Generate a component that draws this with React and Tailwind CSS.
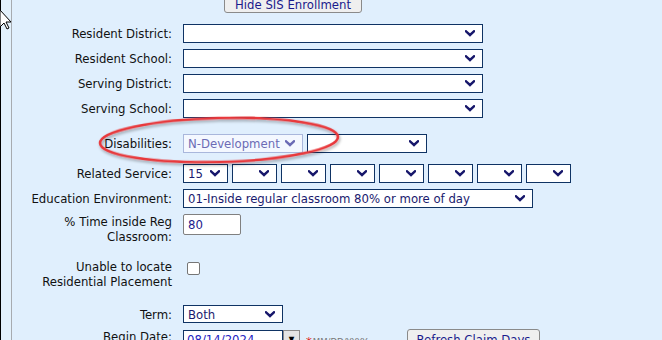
import React from 'react';

const font = "font-['DejaVu_Sans_Condensed','DejaVu_Sans',sans-serif]";

function Chevron({ color = '#17176b' }) {
  return (
    <svg width="10" height="7" viewBox="0 0 10 7" className="shrink-0">
      <polyline points="1,1.3 5,5 9,1.3" fill="none" stroke={color} strokeWidth="2.4" strokeLinecap="square" />
    </svg>
  );
}

function Select({ width, value = '', disabled = false, height = 'h-[19px]' }) {
  return (
    <div
      className={`flex ${height} items-center justify-between border pl-[4px] pr-[7px] text-[13px] leading-none ${
        disabled ? 'border-[#a9b7dc] bg-[#f4f8ff] text-[#6b6bb5]' : 'border-[#0f3364] bg-white text-[#1a1a6e]'
      }`}
      style={{ width }}
    >
      <span className="whitespace-nowrap">{value}</span>
      <Chevron color={disabled ? '#6b6bb5' : '#17176b'} />
    </div>
  );
}

function Row({ label, children, className = '', align = 'items-center' }) {
  return (
    <div className={`flex ${align} ${className}`}>
      <div className="w-[160px] shrink-0 text-right text-[13px] leading-[15px] text-[#111]">{label}</div>
      <div className="ml-[11px] flex items-center">{children}</div>
    </div>
  );
}

export default function App() {
  const services = ['15', '', '', '', '', '', '', ''];

  return (
    <div className={`relative flex h-[340px] w-[662px] overflow-hidden bg-[#e0effd] ${font}`}>
      <div className="w-px bg-black" />
      <div className="w-[10px] bg-[#e3f1fc]" />
      <div className="w-px bg-[#a7abb0]" />

      <div className="flex flex-1 flex-col">
        <div className="-mt-[8px] ml-[212px] flex h-[21px]">
          <button className="h-[21px] w-[138px] rounded-[3px] border border-[#8a8a8a] bg-[#efefef] pt-[3px] text-[13px] leading-none text-[#1a1a8c]">
            Hide SIS Enrollment
          </button>
        </div>

        <Row label="Resident District:" className="mt-[11px]"><Select width={300} /></Row>
        <Row label="Resident School:" className="mt-[6px]"><Select width={300} /></Row>
        <Row label="Serving District:" className="mt-[6px]"><Select width={300} /></Row>
        <Row label="Serving School:" className="mt-[6px]"><Select width={300} /></Row>

        <Row label="Disabilities:" className="mt-[16px]">
          <Select width={120} value="N-Development" disabled />
          <div className="ml-[4px]"><Select width={120} /></div>
        </Row>

        <Row label="Related Service:" className="mt-[11px]">
          <div className="flex gap-[4px]">
            {services.map((s, i) => (
              <Select key={i} width={45} value={s} />
            ))}
          </div>
        </Row>

        <Row label="Education Environment:" className="mt-[6px]">
          <Select width={350} value="01-Inside regular classroom 80% or more of day" />
        </Row>

        <Row label={<>% Time inside Reg<br />Classroom:</>} className="mt-[6px]" align="items-start">
          <div className="flex h-[21px] w-[58px] items-center rounded-[2px] border border-[#808080] bg-white pl-[4px] text-[13px] text-[#1a1a8c]">
            80
          </div>
        </Row>

        <Row label={<>Unable to locate<br />Residential Placement</>} className="mt-[15px]" align="items-start">
          <div className="ml-[4px] mt-[3px] h-[13px] w-[13px] rounded-[2px] border border-[#767676] bg-white" />
        </Row>

        <Row label="Term:" className="mt-[16px]">
          <Select width={100} value="Both" height="h-[18px]" />
        </Row>

        <Row label="Begin Date:" className="mt-[6px]" align="items-start">
          <div className="flex h-[20px] w-[100px] items-center border border-[#0f3364] bg-white pl-[3px] text-[13px] text-[#2222c0]">
            08/14/2024
          </div>
          <div className="flex h-[20px] w-[17px] items-center justify-center border border-[#8a8a8a] bg-[#e4e4e4] text-[8px] text-black">▼</div>
          <div className="flex w-[107px] items-start pl-[6px] pt-[4px]">
            <span className="text-[13px] leading-none text-[#e01010]">*</span>
            <span className="ml-[1px] mt-[2px] text-[9.5px] leading-none text-[#777]">MM/DD/YYYY</span>
          </div>
          <button className="h-[21px] w-[133px] rounded-[3px] border border-[#8a8a8a] bg-[#efefef] text-[13px] leading-none text-[#1a1a8c]">
            Refresh Claim Days
          </button>
        </Row>
      </div>

      <svg className="pointer-events-none absolute left-0 top-0" width="662" height="340">
        <defs>
          <filter id="sh" x="-20%" y="-50%" width="140%" height="200%">
            <feGaussianBlur in="SourceAlpha" stdDeviation="1.5" />
            <feOffset dx="1" dy="2" result="b" />
            <feComponentTransfer><feFuncA type="linear" slope="0.35" /></feComponentTransfer>
            <feMerge><feMergeNode /><feMergeNode in="SourceGraphic" /></feMerge>
          </filter>
        </defs>
        <ellipse cx="219" cy="140" rx="119" ry="22" fill="none" stroke="#e8373a" strokeWidth="2.6" transform="rotate(-1.5 219 140)" filter="url(#sh)" />
        <path d="M0 10 L0 27 L4 23 L7 29 L9 28 L6 22 L11 22 Z" fill="white" stroke="black" strokeWidth="1" />
      </svg>
    </div>
  );
}
